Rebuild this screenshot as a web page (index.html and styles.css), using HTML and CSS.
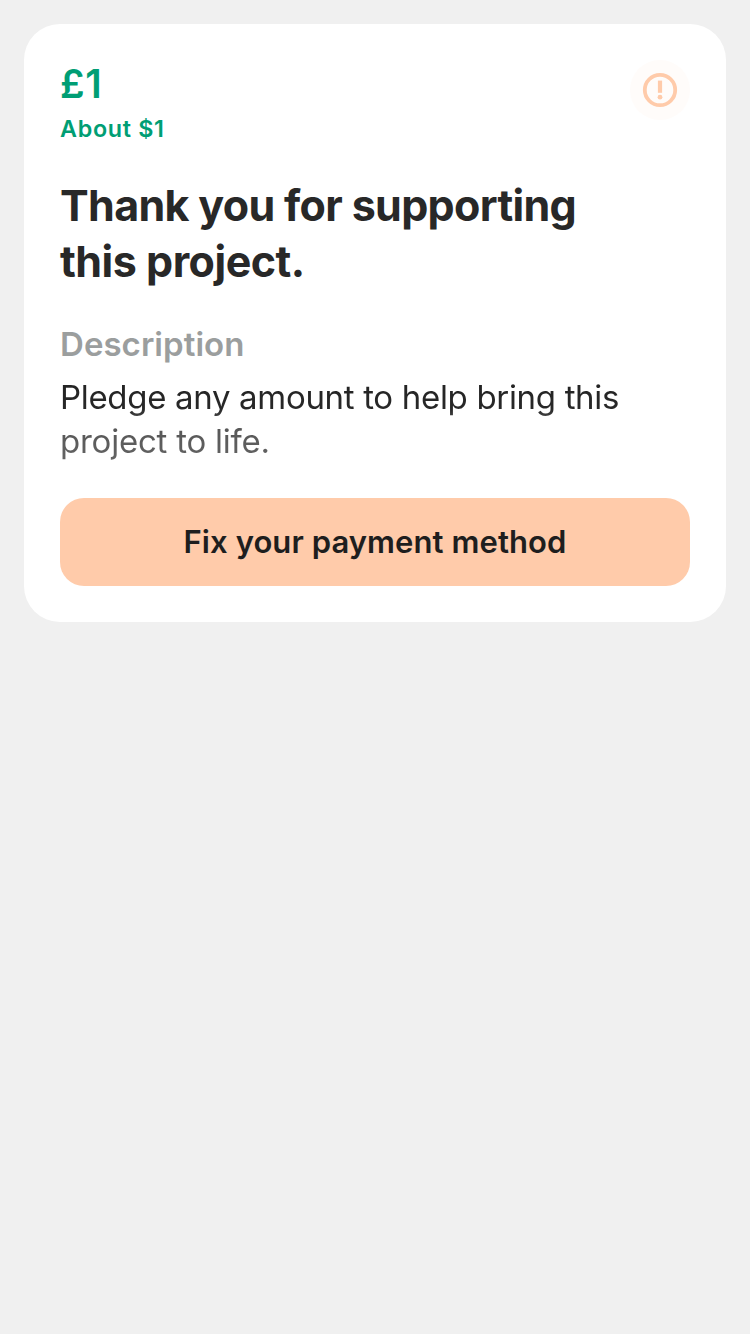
FILE: index.html
```html
<!DOCTYPE html>
<html lang="en">
<head>
<meta charset="utf-8">
<title>Reward</title>
<link rel="stylesheet" href="styles.css">
</head>
<body>
<main class="card">
  <header class="head">
    <div class="amounts">
      <p class="pledge">£1</p>
      <p class="converted">About $1</p>
    </div>
    <svg class="alert" viewBox="0 0 60 60" role="img" aria-label="Alert">
      <circle cx="30" cy="30" r="30" fill="#fffcfa"/>
      <circle cx="30" cy="30" r="15.200" fill="none" stroke="#ffcbaa" stroke-width="3.800"/>
      <path d="M30 20.600V32.800" stroke="#ffcbaa" stroke-width="4.200"/>
      <circle cx="30" cy="37.200" r="2.400" fill="#ffcbaa"/>
    </svg>
  </header>
  <h1 class="title">Thank you for supporting<br><span class="title-end">this project.</span></h1>
  <h2 class="label">Description</h2>
  <p class="description">Pledge any amount to help bring this<br><span class="description-end">project to life.</span></p>
  <button class="fix" type="button">Fix your payment method</button>
</main>
</body>
</html>
```
FILE: styles.css
```css
* { box-sizing: border-box; margin: 0; padding: 0; }
body {
  min-height: 1334px;
  padding: 24px;
  background: #f0f0f0;
  font-family: Inter, "Liberation Sans", sans-serif;
  color: #282828;
}
.card {
  height: 598px;
  padding: 36px;
  border-radius: 36px;
  background: #fff;
}
.head { display: flex; justify-content: space-between; height: 92px; }
.amounts { color: #009e74; }
.pledge { font-size: 39px; line-height: 48px; font-weight: 600; letter-spacing: 0.6px; }
.converted { margin-top: 6px; font-size: 23.300px; line-height: 30px; font-weight: 600; letter-spacing: 0.7px; }
.alert { width: 60px; height: 60px; }
.title { margin-top: 25px; font-size: 43px; line-height: 56px; font-weight: 700; letter-spacing: -0.67px; white-space: nowrap; }
.title-end { letter-spacing: -0.5px; }
.label { margin-top: 34px; font-size: 33px; line-height: 42px; font-weight: 600; letter-spacing: 0.05px; color: #9b9e9e; }
.description {
  margin-top: 10px;
  font-size: 33px;
  line-height: 44px;
  letter-spacing: -0.32px;
  white-space: nowrap;
  color: transparent;
  background: linear-gradient(#222 0, #282828 34px, #555 48px, #646464 88px);
  -webkit-background-clip: text;
  background-clip: text;
}
.description-end { letter-spacing: -0.23px; }
.fix {
  display: block;
  width: 100%;
  height: 88px;
  margin-top: 35px;
  padding-bottom: 1px;
  border: 0;
  border-radius: 24px;
  background: #ffcbaa;
  font: 600 31px Inter, "Liberation Sans", sans-serif;
  letter-spacing: 0.08px;
  color: #1e1e1e;
}
```
